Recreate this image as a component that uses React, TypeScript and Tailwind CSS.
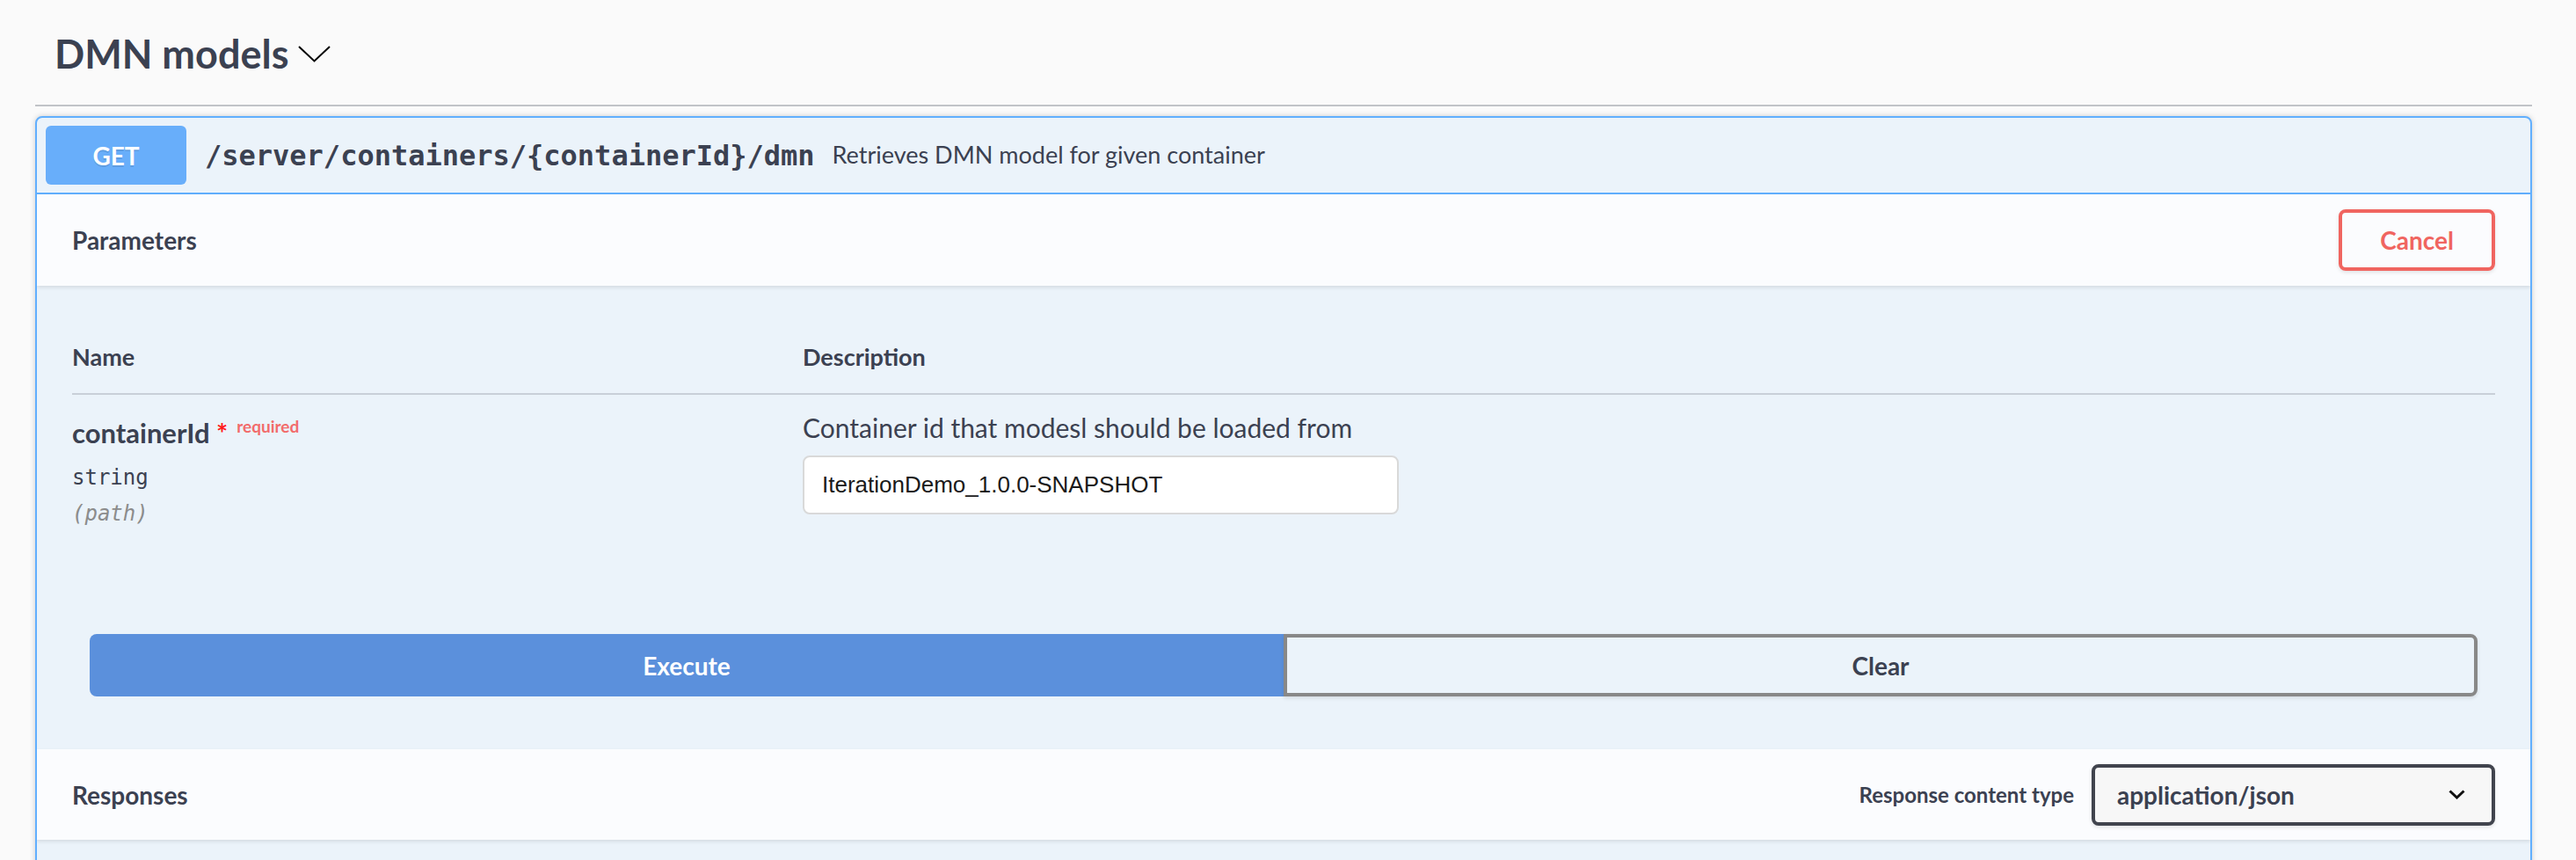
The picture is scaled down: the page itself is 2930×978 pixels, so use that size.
const mono = "font-['DejaVu_Sans_Mono','Liberation_Mono',monospace]";

const Chevron = ({ className = "" }: { className?: string }) => (
  <svg className={className} viewBox="0 0 37 19" fill="none">
    <polyline points="1,1 18.5,17.5 36,1" stroke="#000" strokeWidth="2" />
  </svg>
);

const ParameterRow = () => (
  <div className="flex">
    <div className="w-[831px] pt-[28px]">
      <div className="flex items-baseline">
        <span className="text-[31px] font-bold leading-none">containerId</span>
        <span className="text-[31px] font-bold leading-none text-[#ff1a1a]">&nbsp;*</span>
        <span className="relative top-[-12px] ml-[10px] text-[19px] font-bold leading-none text-[#f26b6b]">
          required
        </span>
      </div>
      <div className={`${mono} mt-[23px] text-[24px] leading-none`}>string</div>
      <div className={`${mono} mt-[17px] text-[24px] italic leading-none text-[#8c8c8c]`}>(path)</div>
    </div>
    <div className="pt-[22px]">
      <p className="text-[30px] leading-none">Container id that modesl should be loaded from</p>
      <input
        readOnly
        value="IterationDemo_1.0.0-SNAPSHOT"
        className="mt-[17px] h-[67px] w-[678px] rounded-[8px] border-2 border-[#d9d9d9] bg-white px-[20px] font-['Liberation_Sans',Arial,sans-serif] text-[26px] text-[#1a1a1a] outline-none"
      />
    </div>
  </div>
);

export default function App() {
  return (
    <div className="min-h-screen w-full bg-[#fafafa] font-['Lato','Noto_Sans',sans-serif] text-[#3b4151]">
      <div className="pl-[40px] pr-[50px]">
        <div className="flex h-[121px] items-center border-b-2 border-[#c1c3c7] pl-[22px] pt-[4px]">
          <h2 className="text-[45px] font-bold leading-none">DMN models</h2>
          <Chevron className="ml-[11px] h-[19px] w-[37px]" />
        </div>

        <div className="mt-[11px] overflow-hidden rounded-[8px] border-2 border-[#61affe] bg-[#ebf3fa] shadow-[0_0_6px_rgba(0,0,0,0.19)]">
          {/* summary */}
          <div className="flex h-[87px] items-center border-b-2 border-[#61affe] px-[10px]">
            <span className="flex h-[67px] w-[160px] items-center justify-center rounded-[6px] bg-[#68aefa] text-[28px] font-bold text-white [text-shadow:0_2px_0_rgba(0,0,0,0.1)]">
              GET
            </span>
            <span className={`${mono} ml-[21px] text-[32px] font-bold`}>
              /server/containers/{"{containerId}"}/dmn
            </span>
            <span className="ml-[20px] text-[27px]">Retrieves DMN model for given container</span>
          </div>

          {/* parameters header */}
          <div className="relative z-[1] flex h-[104px] items-center justify-between bg-[#fbfcfe] px-[40px] shadow-[0_2px_4px_rgba(0,0,0,0.1)]">
            <h4 className="text-[28px] font-bold leading-none">Parameters</h4>
            <button className="h-[70px] w-[178px] rounded-[8px] border-4 border-[#f06560] text-[28px] font-bold text-[#f06560] shadow-[0_2px_4px_rgba(0,0,0,0.1)]">
              Cancel
            </button>
          </div>

          {/* parameters table */}
          <div className="h-[336px] px-[40px] pt-[40px]">
            <div className="flex h-[84px] items-center border-b-2 border-[#c8cfd8] text-[27px] font-bold">
              <span className="w-[831px]">Name</span>
              <span>Description</span>
            </div>
            <ParameterRow />
          </div>

          {/* execute / clear */}
          <div className="flex h-[191px] px-[60px] pt-[60px]">
            <button className="h-[71px] w-1/2 rounded-l-[8px] bg-[#5b90dc] text-[28px] font-bold text-white">
              Execute
            </button>
            <button className="h-[71px] w-1/2 rounded-r-[8px] border-4 border-[#888888] text-[28px] font-bold shadow-[0_2px_4px_rgba(0,0,0,0.1)]">
              Clear
            </button>
          </div>

          {/* responses header */}
          <div className="relative z-[1] flex h-[103px] items-center justify-between bg-[#fbfcfe] px-[40px] shadow-[0_2px_4px_rgba(0,0,0,0.1)]">
            <h4 className="text-[28px] font-bold leading-none">Responses</h4>
            <div className="flex items-center">
              <span className="mr-[20px] text-[24px] font-bold">Response content type</span>
              <div className="flex h-[70px] w-[459px] items-center justify-between rounded-[8px] border-4 border-[#41444e] bg-[#f7f7f7] pl-[25px] pr-[30px] shadow-[0_2px_4px_rgba(0,0,0,0.1)]">
                <span className="text-[28px] font-bold">application/json</span>
                <svg className="h-[11px] w-[19px]" viewBox="0 0 19 11" fill="none">
                  <polyline points="1.5,1.5 9.5,9 17.5,1.5" stroke="#111" strokeWidth="3" />
                </svg>
              </div>
            </div>
          </div>

          <div className="h-[200px]" />
        </div>
      </div>
    </div>
  );
}
